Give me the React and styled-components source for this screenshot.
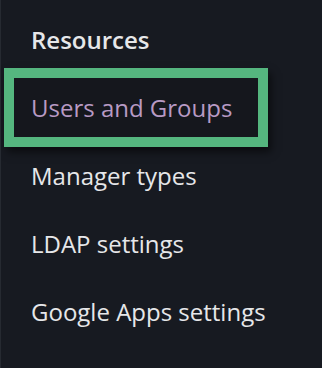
import styled, {createGlobalStyle} from "styled-components";

const GlobalStyle = createGlobalStyle`
    html, body {
        margin: 0;
        padding: 0;
        background: #171a21;
    }
`;

const Sidebar = styled.nav`
    width: 322px;
    height: 368px;
    box-sizing: border-box;
    background: #171a21;
    border-left: 1px solid #262a31;
    padding: 20px 0 0 30px;
    display: flex;
    flex-direction: column;
    gap: 28px;
    font-family: "Open Sans", "Noto Sans", sans-serif;
    font-size: 24px;
    line-height: 40px;
    color: #e6e7e9;
    overflow: hidden;
`;

const Heading = styled.div`
    font-weight: 600;
    white-space: nowrap;
`;

const NavItem = styled.a`
    display: block;
    white-space: nowrap;
    color: ${props => props.$active ? '#b89ac4' : '#e6e7e9'};
    text-decoration: none;
    cursor: pointer;
`;

const Highlight = styled.div`
    align-self: flex-start;
    box-sizing: border-box;
    width: 264px;
    margin: -20px 0 -19px -27px;
    padding: 10px 0 9px 17px;
    border: 10px solid #55b67f;
    background: #15171d;
    box-shadow: 3px 5px 8px rgba(0, 0, 0, 0.55);
`;

const items = ["Manager types", "LDAP settings", "Google Apps settings"];

const App = () => {
    return (
        <>
            <GlobalStyle/>
            <Sidebar>
                <Heading>Resources</Heading>
                <Highlight>
                    <NavItem $active>Users and Groups</NavItem>
                </Highlight>
                {items.map(label => (
                    <NavItem key={label}>{label}</NavItem>
                ))}
            </Sidebar>
        </>
    );
};

export default App;
